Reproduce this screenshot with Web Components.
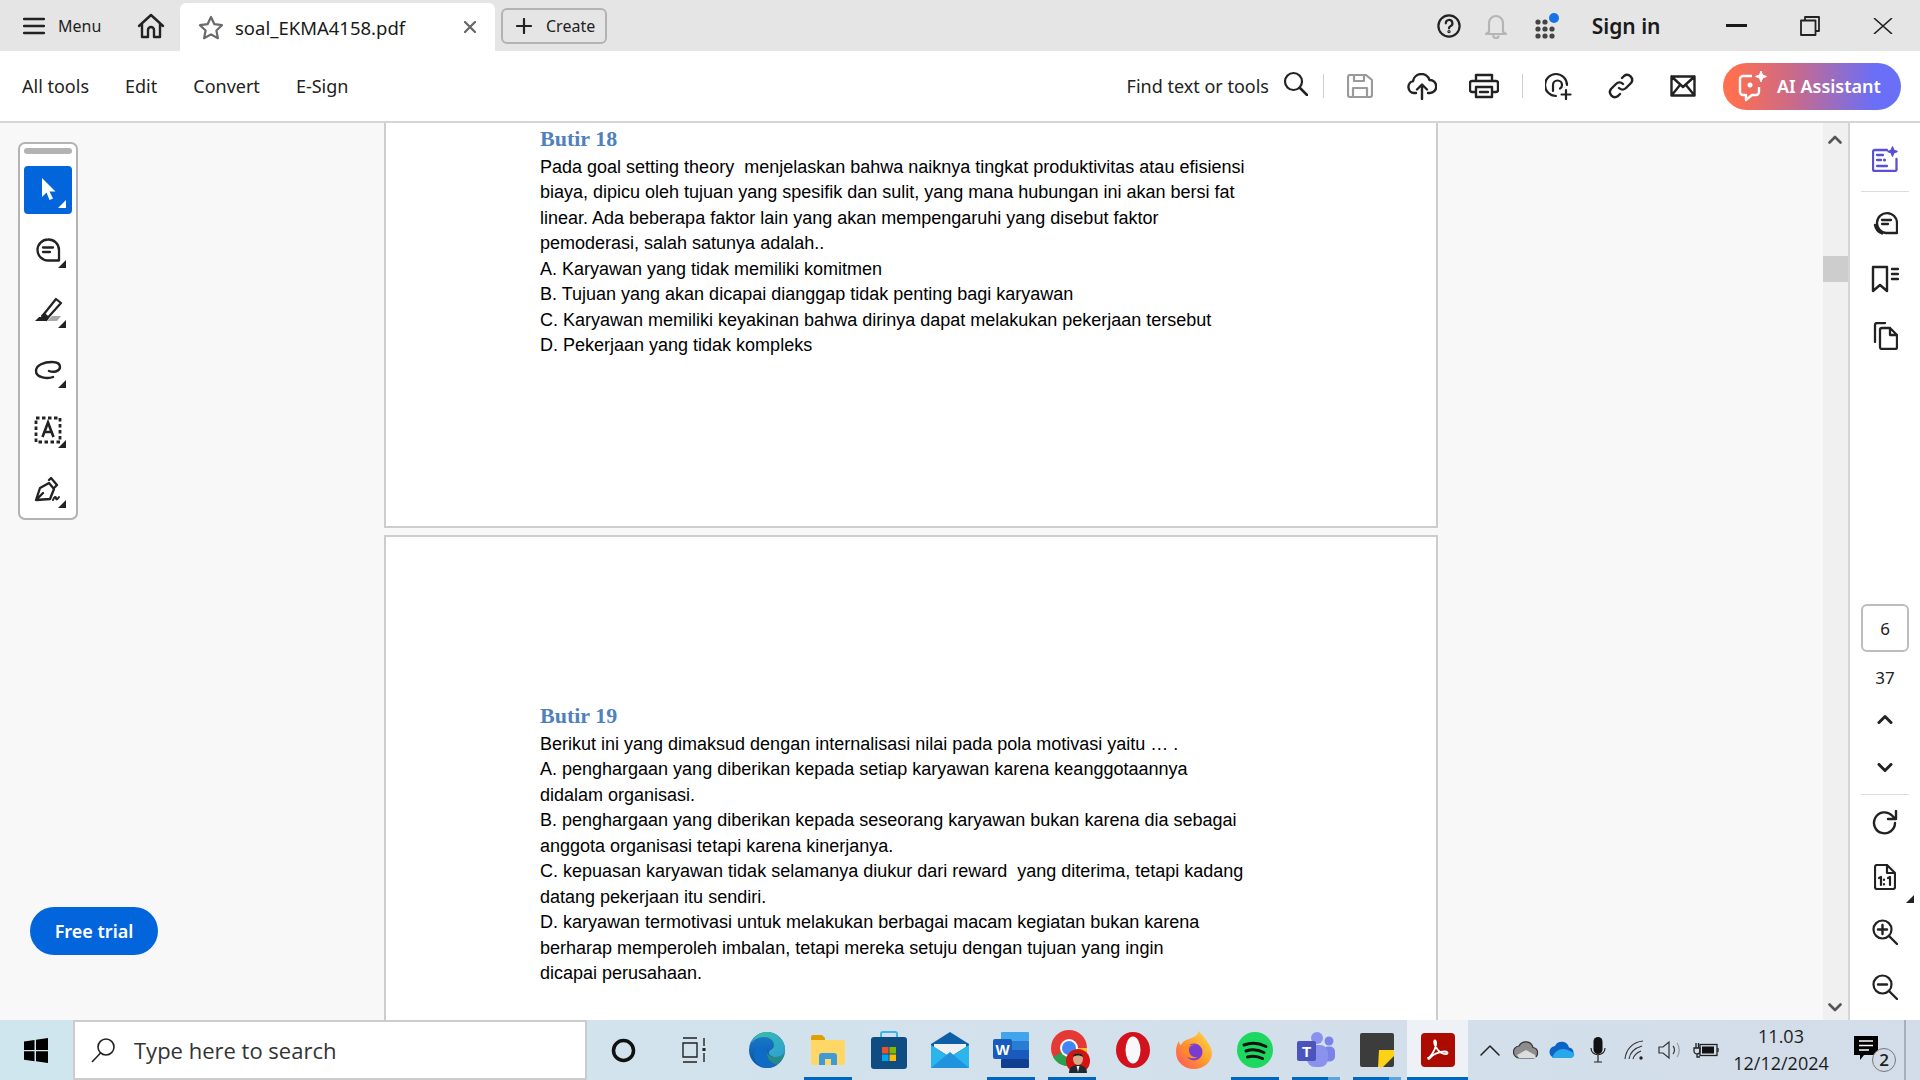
<!DOCTYPE html>
<html lang="id">
<head>
<meta charset="utf-8">
<title>soal_EKMA4158.pdf</title>
<style>
  html, body { margin: 0; height: 100%; overflow: hidden; background: #f8f8f8; }
  body { display: flex; flex-direction: column; width: 1920px; height: 1080px; font-family: "Noto Sans", sans-serif; }
  svg { display: block; }
</style>
</head>
<body>
<app-titlebar></app-titlebar>
<app-toolbar></app-toolbar>
<doc-workspace>
  <pdf-page slot="pages" style="height: 405px">
    <pdf-question heading="Butir 18" style="padding-top: 3px">
      <pdf-line>Pada goal setting theory &nbsp;menjelaskan bahwa naiknya tingkat produktivitas atau efisiensi</pdf-line>
      <pdf-line>biaya, dipicu oleh tujuan yang spesifik dan sulit, yang mana hubungan ini akan bersi fat</pdf-line>
      <pdf-line>linear. Ada beberapa faktor lain yang akan mempengaruhi yang disebut faktor</pdf-line>
      <pdf-line>pemoderasi, salah satunya adalah..</pdf-line>
      <pdf-line>A. Karyawan yang tidak memiliki komitmen</pdf-line>
      <pdf-line>B. Tujuan yang akan dicapai dianggap tidak penting bagi karyawan</pdf-line>
      <pdf-line>C. Karyawan memiliki keyakinan bahwa dirinya dapat melakukan pekerjaan tersebut</pdf-line>
      <pdf-line>D. Pekerjaan yang tidak kompleks</pdf-line>
    </pdf-question>
  </pdf-page>
  <pdf-page slot="pages" style="height: 600px">
    <pdf-question heading="Butir 19" style="padding-top: 166px">
      <pdf-line>Berikut ini yang dimaksud dengan internalisasi nilai pada pola motivasi yaitu … .</pdf-line>
      <pdf-line>A. penghargaan yang diberikan kepada setiap karyawan karena keanggotaannya</pdf-line>
      <pdf-line>didalam organisasi.</pdf-line>
      <pdf-line>B. penghargaan yang diberikan kepada seseorang karyawan bukan karena dia sebagai</pdf-line>
      <pdf-line>anggota organisasi tetapi karena kinerjanya.</pdf-line>
      <pdf-line>C. kepuasan karyawan tidak selamanya diukur dari reward &nbsp;yang diterima, tetapi kadang</pdf-line>
      <pdf-line>datang pekerjaan itu sendiri.</pdf-line>
      <pdf-line>D. karyawan termotivasi untuk melakukan berbagai macam kegiatan bukan karena</pdf-line>
      <pdf-line>berharap memperoleh imbalan, tetapi mereka setuju dengan tujuan yang ingin</pdf-line>
      <pdf-line>dicapai perusahaan.</pdf-line>
    </pdf-question>
  </pdf-page>
</doc-workspace>
<win-taskbar></win-taskbar>

<script>
const ink = '#222';
const svg = (w, h, body, vb) => `<svg width="${w}" height="${h}" viewBox="${vb || `0 0 ${w} ${h}`}" fill="none" stroke="currentColor" stroke-width="2.2" stroke-linecap="round" stroke-linejoin="round">${body}</svg>`;

class AppTitlebar extends HTMLElement {
  constructor() {
    super();
    this.attachShadow({ mode: 'open' });
    this.shadowRoot.innerHTML = `
      <style>
        :host { display: flex; align-items: stretch; height: 51px; flex: none; background: #e5e5e5; color: ${ink}; font-size: 16px; }
        .menu { display: flex; align-items: center; width: 137px; padding-left: 23px; box-sizing: border-box; gap: 13px; }
        .home { display: flex; align-items: center; width: 43px; }
        .tab { display: flex; align-items: center; width: 315px; margin-top: 3px; background: #fff; border-radius: 6px 6px 0 0; box-sizing: border-box; padding-left: 18px; font-size: 18.5px; color: #1a1a1a; }
        .tab span { margin-left: 11px; flex: 1; }
        .tab svg:last-child { margin-right: 19px; color: #666; }
        .create { display: flex; align-items: center; align-self: center; height: 36px; width: 106px; margin-left: 6px; box-sizing: border-box; border: 2px solid #b3b3b3; border-radius: 6px; padding-left: 13px; gap: 14px; }
        .spacer { flex: 1; }
        .slot { display: flex; align-items: center; justify-content: center; }
        .sign { font-size: 21px; font-weight: 600; color: #1a1a1a; margin: 0 39px 0 18px; align-self: center; white-space: nowrap; }
        .win { width: 73.5px; }
      </style>
      <div class="menu">
        ${svg(22, 18, '<path d="M1 2h20M1 9h20M1 16h20" stroke-width="2.4"/>')}
        <span>Menu</span>
      </div>
      <div class="home">${svg(28, 26, '<path d="M2 13 14 2l12 11M5 11v13h6v-7a3 3 0 0 1 6 0v7h6V11" stroke-width="2.4"/>')}</div>
      <div class="tab">
        ${svg(26, 25, '<path d="M13 2l3.4 7.2 7.6 1-5.6 5.3 1.5 7.7L13 19.4l-6.9 3.8 1.5-7.7L2 10.2l7.6-1z" stroke="#6a6a6a"/>')}
        <span>soal_EKMA4158.pdf</span>
        ${svg(12, 12, '<path d="M1 1l10 10M11 1 1 11" stroke-width="2.2"/>')}
      </div>
      <div class="create">
        ${svg(16, 16, '<path d="M8 1v14M1 8h14" stroke-width="2.2"/>')}
        <span>Create</span>
      </div>
      <div class="spacer"></div>
      <div class="slot" style="width:47px">${svg(24, 24, '<circle cx="12" cy="12" r="10.6"/><path d="M8.8 9.3a3.3 3.3 0 1 1 4.6 3c-1 .5-1.4 1-1.4 2"/><circle cx="12" cy="17.6" r=".6"/>')}</div>
      <div class="slot" style="width:47px;color:#b5b5b5">${svg(24, 26, '<path d="M5 19V10a7 7 0 0 1 14 0v9l3 2H2zM9.5 21.5a2.6 2.6 0 0 0 5 2"/>')}</div>
      <div class="slot" style="width:54px">
        <svg width="26" height="26" viewBox="0 0 26 26">
          <g fill="#444"><circle cx="4" cy="9" r="2.6"/><circle cx="11" cy="9" r="2.6"/><circle cx="4" cy="16" r="2.6"/><circle cx="11" cy="16" r="2.6"/><circle cx="18" cy="16" r="2.6"/><circle cx="4" cy="23" r="2.6"/><circle cx="11" cy="23" r="2.6"/><circle cx="18" cy="23" r="2.6"/></g>
          <circle cx="20" cy="5" r="5" fill="#1473e6"/>
        </svg>
      </div>
      <div class="sign">Sign in</div>
      <div class="slot win">${svg(21, 3, '<path d="M0 1.5h21" stroke-width="3" stroke-linecap="butt" stroke="#1a1a1a"/>')}</div>
      <div class="slot win">${svg(20, 20, '<path d="M5 4V1h14v14h-3M1 4.5h14.500V19H1z" stroke-width="1.8" stroke-linecap="butt"/>')}</div>
      <div class="slot win">${svg(20, 16, '<path d="M1.500 .5l17 15M18.500 .5l-17 15" stroke-width="1.6"/>')}</div>
    `;
  }
}
customElements.define('app-titlebar', AppTitlebar);

class AppToolbar extends HTMLElement {
  constructor() {
    super();
    this.attachShadow({ mode: 'open' });
    this.shadowRoot.innerHTML = `
      <style>
        :host { display: flex; align-items: center; height: 70px; flex: none; background: #fff; border-bottom: 2px solid #d5d5d5; color: ${ink}; padding: 0 19px 0 22px; box-sizing: content-box; font-size: 18px; }
        nav { display: flex; gap: 36px; }
        .spacer { flex: 1; }
        .find { white-space: nowrap; }
        .search { margin: 0 15px 0 14px; }
        .sep { width: 1px; height: 24px; background: #cfcfcf; flex: none; }
        .ico { display: flex; width: 62px; justify-content: center; flex: none; }
        .ai { display: flex; align-items: center; width: 178px; height: 47px; margin-left: 9px; box-sizing: border-box; padding-left: 15px; gap: 9px; border-radius: 24px; color: #fff; font-weight: 600; background: linear-gradient(90deg, #ff6f50 5%, #c96a8a 40%, #6a6ff8 85%); white-space: nowrap; }
      </style>
      <nav><span>All tools</span><span>Edit</span><span>Convert</span><span>E-Sign</span></nav>
      <div class="spacer"></div>
      <span class="find">Find text or tools</span>
      <div class="search">${svg(25, 25, '<circle cx="10.500" cy="10.500" r="8.500"/><path d="M17 17l7 7" stroke-width="2.6"/>')}</div>
      <div class="sep" style="margin-right:5px"></div>
      <div class="ico" style="color:#9a9a9a">${svg(26, 24, '<path d="M3 1h16l6 5v15a2 2 0 0 1-2 2H3a2 2 0 0 1-2-2V3a2 2 0 0 1 2-2zM7 1v6h10V1M6 23v-9h14v9"/>')}</div>
      <div class="ico">${svg(30, 27, '<path d="M9 20H7a6 6 0 0 1-1-11.800A8.500 8.500 0 0 1 22.500 7 6.500 6.500 0 0 1 23 20h-2M15 26V12M10 16.500l5-5 5 5" stroke-width="2.4"/>')}</div>
      <div class="ico">${svg(30, 26, '<path d="M7 8V2h16v6M7 19H3a2 2 0 0 1-2-2V10a2 2 0 0 1 2-2h24a2 2 0 0 1 2 2v7a2 2 0 0 1-2 2h-4M7 14h16v10H7zM11 19h8" stroke-width="2.4"/>')}</div>
      <div class="sep" style="margin:0 5px 0 7px"></div>
      <div class="ico">${svg(28, 28, '<path d="M11 24A11 11 0 1 1 22 13M8 19v-6a4.500 4.500 0 0 1 9 0c0 2-1 3-2 3.500M21 18v9M16.500 22.500h9" stroke-width="2.2"/>')}</div>
      <div class="ico">${svg(26, 26, '<path d="M11 15a5 5 0 0 0 7 0l5-5a5 5 0 0 0-7-7l-2 2M15 11a5 5 0 0 0-7 0l-5 5a5 5 0 0 0 7 7l2-2" stroke-width="2.4"/>')}</div>
      <div class="ico">${svg(26, 22, '<path d="M1.500 1.500h23v19h-23zM1.500 1.500 13 12 24.500 1.500M1.500 20.500 10 10M24.500 20.500 16 10" stroke-width="2.4"/>')}</div>
      <div class="ai">
        <svg width="30" height="32" viewBox="0 0 30 32" fill="none" stroke="#fff" stroke-width="2.4" stroke-linejoin="round">
          <path d="M14 6H5a3 3 0 0 0-3 3v13a3 3 0 0 0 3 3h3v5l6-5h4a3 3 0 0 0 3-3v-5"/>
          <path d="M23 1l1.500 4 4 1.500-4 1.500-1.500 4-1.500-4-4-1.500 4-1.500z" fill="#fff" stroke-width="1"/>
          <circle cx="12" cy="15" r="2.500" fill="#fff" stroke="none"/>
        </svg>
        <span>AI Assistant</span>
      </div>
    `;
  }
}
customElements.define('app-toolbar', AppToolbar);

class ToolButton extends HTMLElement {
  constructor() {
    super();
    this.attachShadow({ mode: 'open' });
    this.shadowRoot.innerHTML = `
      <style>
        :host { display: flex; position: relative; width: 48px; height: 48px; align-items: center; justify-content: center; color: ${ink}; border-radius: 4px; }
        :host([selected]) { background: #0265dc; color: #fff; }
        :host::after { content: ""; position: absolute; right: 6px; bottom: 6px; width: 8px; height: 8px; background: currentColor; clip-path: polygon(100% 0, 100% 100%, 0 100%); }
      </style>
      <slot></slot>
    `;
  }
}
customElements.define('tool-button', ToolButton);

class ToolPalette extends HTMLElement {
  constructor() {
    super();
    this.attachShadow({ mode: 'open' });
    this.shadowRoot.innerHTML = `
      <style>
        :host { position: absolute; left: 18px; top: 19px; width: 60px; height: 378px; box-sizing: border-box; background: #fff; border: 2px solid #b3b3b3; border-radius: 7px; display: flex; flex-direction: column; align-items: center; padding-top: 4px; }
        .grip { width: 48px; height: 6px; border-radius: 3px; background: #b3b3b3; margin-bottom: 12px; flex: none; }
        .tools { display: flex; flex-direction: column; gap: 12px; }
      </style>
      <div class="grip"></div>
      <div class="tools">
        <tool-button selected><svg width="48" height="48" viewBox="0 0 48 48"><path d="M18 12l13.500 13.500h-6l3.500 7-3.500 1.500-3-7.500L18 31z" fill="#fff"/></svg></tool-button>
        <tool-button>${svg(26, 24, '<path d="M13 1.500a10.500 10.500 0 1 0 0 21h11V12A10.500 10.500 0 0 0 13 1.500zM8 9.500h10M8 14h7" stroke-width="2.300"/>')}</tool-button>
        <tool-button>
          <svg width="28" height="26" viewBox="0 0 28 26" fill="none" stroke="currentColor" stroke-width="2.200" stroke-linejoin="round">
            <path d="M10 17 22 2l5 4-13 14.500z"/><path d="M8 19l2-2 4 3.500-1.500 2.500z" fill="currentColor"/>
            <path d="M1 24l4-4h5l3 4z" fill="currentColor" stroke="none"/><path d="M15 24l5-5h9l-4 5z" fill="#aaa" stroke="none" transform="translate(-2 0)"/>
          </svg>
        </tool-button>
        <tool-button>${svg(28, 20, '<path d="M19 17c-5 2-17 1-17-6C2 5 10 2 18 2c5 0 8 2 8 5 0 4-6 6-11 4" stroke-width="2.400"/>')}</tool-button>
        <tool-button>
          <svg width="28" height="28" viewBox="0 0 28 28" fill="none">
            <rect x="2" y="2" width="24" height="24" stroke="currentColor" stroke-width="2.800" stroke-dasharray="3.500 2.500"/>
            <path d="M8.500 21 14 6.500 19.500 21M10.500 16h7" stroke="currentColor" stroke-width="2.600"/>
          </svg>
        </tool-button>
        <tool-button>
          <svg width="28" height="26" viewBox="0 0 28 26" fill="none" stroke="currentColor" stroke-width="2.300" stroke-linejoin="round" stroke-linecap="round">
            <path d="M2 23 6 11l9-5 5 6-4 10zM2 23l7-7M15 3l2-2 6 7-2 2"/><path d="M19 23c1-3 3-4 3-2s1 2 3-1" stroke-width="2"/>
          </svg>
        </tool-button>
      </div>
    `;
  }
}
customElements.define('tool-palette', ToolPalette);

class FreeTrial extends HTMLElement {
  constructor() {
    super();
    this.attachShadow({ mode: 'open' });
    this.shadowRoot.innerHTML = `
      <style>
        :host { position: absolute; left: 30px; top: 784px; width: 128px; height: 48px; border-radius: 24px; background: #0265dc; color: #fff; display: flex; align-items: center; justify-content: center; font-size: 18px; font-weight: 600; }
      </style>
      <slot>Free trial</slot>
    `;
  }
}
customElements.define('free-trial', FreeTrial);

class PdfPage extends HTMLElement {
  constructor() {
    super();
    this.attachShadow({ mode: 'open' });
    this.shadowRoot.innerHTML = `
      <style>
        :host { display: block; flex: none; box-sizing: border-box; background: #fff; border: 2px solid #cdcdcd; }
        :host(:first-child) { border-top: 0; }
      </style>
      <slot></slot>
    `;
  }
}
customElements.define('pdf-page', PdfPage);

class PdfQuestion extends HTMLElement {
  constructor() {
    super();
    this.attachShadow({ mode: 'open' });
    this.shadowRoot.innerHTML = `
      <style>
        :host { display: block; padding-left: 154px; }
        h2 { margin: 0 0 3px; height: 26px; line-height: 26px; font: bold 22px/26px "Liberation Serif", serif; color: #4f81bd; }
      </style>
      <h2></h2>
      <slot></slot>
    `;
    this.shadowRoot.querySelector('h2').textContent = this.getAttribute('heading') || '';
  }
  connectedCallback() {
    this.shadowRoot.querySelector('h2').textContent = this.getAttribute('heading') || '';
  }
}
customElements.define('pdf-question', PdfQuestion);

class PdfLine extends HTMLElement {
  constructor() {
    super();
    this.attachShadow({ mode: 'open' });
    this.shadowRoot.innerHTML = `
      <style>
        :host { display: block; height: 25.46px; line-height: 25.46px; font-family: "Liberation Sans", Arial, sans-serif; font-size: 18px; color: #000; white-space: nowrap; }
      </style>
      <slot></slot>
    `;
  }
}
customElements.define('pdf-line', PdfLine);

class RailButton extends HTMLElement {
  constructor() {
    super();
    this.attachShadow({ mode: 'open' });
    this.shadowRoot.innerHTML = `
      <style>
        :host { display: flex; align-items: center; justify-content: center; width: 70px; flex: none; color: ${ink}; }
      </style>
      <slot></slot>
    `;
  }
}
customElements.define('rail-button', RailButton);

class DocRail extends HTMLElement {
  constructor() {
    super();
    this.attachShadow({ mode: 'open' });
    this.shadowRoot.innerHTML = `
      <style>
        :host { display: flex; flex-direction: column; width: 70px; flex: none; background: #fff; font-size: 17px; color: ${ink}; }
        .rule { height: 1px; width: 48px; background: #ddd; margin: 0 auto; flex: none; }
        .page { width: 48px; height: 48px; box-sizing: border-box; margin: 0 auto; border: 2px solid #bdbdbd; border-radius: 6px; display: flex; align-items: center; justify-content: center; }
        .num { text-align: center; }
        .tri { position: relative; }
        .tri::after { content: ""; position: absolute; right: 6px; bottom: 0; width: 8px; height: 8px; background: ${ink}; clip-path: polygon(100% 0, 100% 100%, 0 100%); }
      </style>
      <rail-button style="height:56px;margin-top:8px;padding-bottom:0"><svg width="26" height="26" viewBox="0 0 26 26" fill="none" stroke="#5a50d6" stroke-width="2.300" stroke-linejoin="round" stroke-linecap="round"><path d="M15 4H3a2 2 0 0 0-2 2v17a2 2 0 0 0 2 2h20a1.500 1.500 0 0 0 1.500-2V13M5 9h6M5 14h4M5 20h10"/><circle cx="12.500" cy="14" r="1.600" fill="#5a50d6" stroke="none"/><path d="M20.500 1l1.200 3.300L25 5.500l-3.300 1.200-1.200 3.300-1.200-3.300L16 5.500l3.300-1.200z" fill="#5a50d6" stroke-width="1.500"/></svg></rail-button>
      <div class="rule" style="margin-top:4px"></div>
      <rail-button style="height:60px">${svg(26, 26, '<path d="M25 24H14a10 10 0 1 1 11-10zM10 11h9M10 15h6M10 24.500a11 11 0 0 1-7-8.500M5 9" stroke-width="2.300"/>')}</rail-button>
      <rail-button style="height:53px">${svg(28, 28, '<path d="M2 2h14v24l-7-6-7 6zM21 4h6M21 9h6M21 14h6" stroke-width="2.400"/>')}</rail-button>
      <rail-button style="height:62px">${svg(26, 28, '<path d="M3 20V3a2 2 0 0 1 2-2h8M8 8a2 2 0 0 1 2-2h8l7 7v12a2 2 0 0 1-2 2H10a2 2 0 0 1-2-2zM18 6v7h7" stroke-width="2.300"/>')}</rail-button>
      <div style="height:237px;flex:none"></div>
      <div class="page">6</div>
      <div class="num" style="margin-top:14px;height:24px;line-height:24px">37</div>
      <rail-button style="height:50px;margin-top:4px">${svg(16, 10, '<path d="M2 8.500l6-6 6 6" stroke-width="3"/>')}</rail-button>
      <rail-button style="height:48px">${svg(16, 10, '<path d="M2 1.500l6 6 6-6" stroke-width="3"/>')}</rail-button>
      <div class="rule" style="margin-top:2px"></div>
      <rail-button style="height:56px">${svg(26, 26, '<path d="M23 13a10.500 10.500 0 1 1-3-7.500l3.500 3.500M24 1v8h-8" stroke-width="2.400"/>')}</rail-button>
      <rail-button class="tri" style="height:52px">${svg(22, 26, '<path d="M3 1h10l8 8v14a2 2 0 0 1-2 2H3a2 2 0 0 1-2-2V3a2 2 0 0 1 2-2zM13 1v8h8M5 14l2-1v8M10 15.500v.500M10 20v.500M14 14l2-1v8" stroke-width="2.200"/>')}</rail-button>
      <rail-button style="height:58px">${svg(26, 26, '<circle cx="10.500" cy="10.500" r="9"/><path d="M17 17l8 8M6 10.500h9M10.500 6v9" stroke-width="2.400"/>')}</rail-button>
      <rail-button style="height:52px">${svg(26, 26, '<circle cx="10.500" cy="10.500" r="9"/><path d="M17 17l8 8M6 10.500h9" stroke-width="2.400"/>')}</rail-button>
    `;
  }
}
customElements.define('doc-rail', DocRail);

class DocWorkspace extends HTMLElement {
  constructor() {
    super();
    this.attachShadow({ mode: 'open' });
    this.shadowRoot.innerHTML = `
      <style>
        :host { display: flex; flex: 1; min-height: 0; overflow: hidden; background: #f8f8f8; }
        .view { position: relative; flex: none; width: 1823px; overflow: hidden; }
        .pages { display: flex; flex-direction: column; gap: 7px; width: 1054px; margin-left: 384px; }
        .scroll { position: relative; flex: none; width: 25px; background: #f0f0f0; color: #555; }
        .scroll svg { position: absolute; left: 5px; }
        .thumb { position: absolute; left: 0; right: 0; top: 133px; height: 26px; background: #cdcdcd; }
        .line { width: 2px; flex: none; background: #d5d5d5; }
      </style>
      <div class="view">
        <div class="pages"><slot name="pages"></slot></div>
        <tool-palette></tool-palette>
        <free-trial></free-trial>
      </div>
      <div class="scroll">
        ${svg(14, 9, '<path d="M1.500 7.500l5.500-5.500 5.500 5.500" stroke-width="2.600"/>').replace('<svg', '<svg style="top:12px"')}
        <div class="thumb"></div>
        ${svg(14, 9, '<path d="M1.500 1.500l5.500 5.500 5.500-5.500" stroke-width="2.600"/>').replace('<svg', '<svg style="top:880px"')}
      </div>
      <div class="line"></div>
      <doc-rail></doc-rail>
    `;
  }
}
customElements.define('doc-workspace', DocWorkspace);

class TaskbarApp extends HTMLElement {
  constructor() {
    super();
    this.attachShadow({ mode: 'open' });
    this.shadowRoot.innerHTML = `
      <style>
        :host { display: flex; position: relative; width: 61px; height: 60px; flex: none; align-items: center; justify-content: center; }
        :host([state="active"]) { background: #eef2f7; }
        :host([state])::after { content: ""; position: absolute; left: 6.500px; right: 6.500px; bottom: 0; height: 3px; background: #0067c0; }
        :host([state="active"])::after { left: 0; right: 0; }
        :host([state="stack"])::after { background: linear-gradient(90deg, #0067c0 75%, #5ca5e0 75%); }
      </style>
      <slot></slot>
    `;
  }
}
customElements.define('taskbar-app', TaskbarApp);

class WinTaskbar extends HTMLElement {
  constructor() {
    super();
    this.attachShadow({ mode: 'open' });
    this.shadowRoot.innerHTML = `
      <style>
        :host { display: flex; align-items: center; height: 60px; flex: none; background: linear-gradient(90deg, #d0e6ee 0%, #d2e2ec 40%, #d3dde9 100%); font-family: "Open Sans", sans-serif; color: #1c1c1c; }
        .start { width: 73px; display: flex; justify-content: center; flex: none; padding-right: 1px; box-sizing: border-box; }
        .search { width: 514px; height: 60px; box-sizing: border-box; flex: none; background: #fff; border: 2px solid #ccc; display: flex; align-items: center; padding-left: 15px; gap: 18px; font-size: 22px; color: #333; }
        .round { width: 72px; display: flex; justify-content: center; flex: none; }
        .apps { display: flex; margin-left: 5px; }
        .tray { display: flex; align-items: center; margin-left: 4px; }
        .t { width: 36px; display: flex; justify-content: center; flex: none; }
        .clock { width: 114px; text-align: center; font-size: 18px; line-height: 27px; flex: none; }
        .note { position: relative; width: 44px; margin-left: 16px; flex: none; }
        .badge { position: absolute; left: 18px; top: 12px; width: 24px; height: 24px; box-sizing: border-box; border-radius: 50%; background: #d2dbe6; border: 1.500px solid #777; display: flex; align-items: center; justify-content: center; font-size: 17px; font-weight: 600; }
        .edge { width: 2px; height: 60px; background: #a9afb8; margin-left: 6px; flex: none; }
      </style>
      <div class="start">
        <svg width="24" height="25" viewBox="0 0 24 25"><path fill="#000" d="M0 3.500l10.500-1.500v10H0zM12 1.800 24 0v12H12zM0 13.200h10.500v10L0 21.700zM12 13.200h12V25l-12-1.800z"/></svg>
      </div>
      <div class="search">
        <svg width="26" height="26" viewBox="0 0 26 26" fill="none" stroke="#222" stroke-width="1.600"><circle cx="16" cy="10" r="8"/><path d="M10.500 16 2 25"/></svg>
        <span>Type here to search</span>
      </div>
      <div class="round"><svg width="25" height="25" viewBox="0 0 25 25" fill="none"><circle cx="12.500" cy="12.500" r="10" stroke="#111" stroke-width="3.500"/></svg></div>
      <div class="round"><svg width="26" height="26" viewBox="0 0 26 26" fill="none" stroke="#222" stroke-width="1.400"><path d="M1 1h14M1 25h14M1 6h14v14H1zM22 1v8M22 16v9"/><rect x="20.500" y="11" width="3" height="3" fill="#222" stroke="none"/></svg></div>
      <div class="apps">
        <taskbar-app>
          <svg width="38" height="38" viewBox="0 0 38 38">
            <defs><linearGradient id="e1" x1="0" y1="0" x2="1" y2="1"><stop offset="0" stop-color="#35c1a0"/><stop offset="1" stop-color="#2f9fd8"/></linearGradient><linearGradient id="e2" x1="0" y1="0" x2="0" y2="1"><stop offset="0" stop-color="#1a7fd0"/><stop offset="1" stop-color="#0c4fa0"/></linearGradient></defs>
            <circle cx="19" cy="19" r="18" fill="url(#e2)"/>
            <path d="M3 13C6 5 12 1 19 1c10 0 18 8 18 17 0 5-4 8-9 8-4 0-7-2-7-4 0-4 5-3 5-8 0-5-5-8-10-8C10 6 5 9 3 13z" fill="url(#e1)"/>
            <path d="M19 22c0 6 4 10 10 12-3 2-7 3-10 3C11 37 5 30 6 22c2-6 8-9 13-7-1 2-1 5 0 7z" fill="#0f6cc4"/>
            <path d="M37 18c1 6-3 12-8 16-6-2-10-6-10-12 2 3 5 4 9 4 5 0 9-3 9-8z" fill="#3bb36b" opacity=".55"/>
          </svg>
        </taskbar-app>
        <taskbar-app state="open">
          <svg width="34" height="36" viewBox="0 0 34 36">
            <path d="M0 5a2 2 0 0 1 2-2h9l3 3v4H0z" fill="#dfa100"/>
            <path d="M0 8h32a2 2 0 0 1 2 2v21a2 2 0 0 1-2 2H2a2 2 0 0 1-2-2z" fill="#ffd766"/>
            <path d="M8 33V24a3 3 0 0 1 3-3h12a3 3 0 0 1 3 3v9h-6v-6h-6v6z" fill="#3f9bd8"/>
          </svg>
        </taskbar-app>
        <taskbar-app>
          <svg width="36" height="38" viewBox="0 0 36 38">
            <path d="M10 9V3a2 2 0 0 1 2-2h12a2 2 0 0 1 2 2v6" fill="none" stroke="#39b6e8" stroke-width="2"/>
            <path d="M0 9a3 3 0 0 1 3-3h30a3 3 0 0 1 3 3v26a3 3 0 0 1-3 3H3a3 3 0 0 1-3-3z" fill="#0f4c81"/>
            <rect x="11" y="16" width="6.500" height="6.500" fill="#f25022"/><rect x="18.500" y="16" width="6.500" height="6.500" fill="#7fba00"/><rect x="11" y="23.500" width="6.500" height="6.500" fill="#00a4ef"/><rect x="18.500" y="23.500" width="6.500" height="6.500" fill="#ffb900"/>
          </svg>
        </taskbar-app>
        <taskbar-app>
          <svg width="38" height="36" viewBox="0 0 38 36">
            <path d="M0 12 19 0l19 12v24H0z" fill="#0f5fa6"/>
            <path d="M3 12h32v3L19 25 3 15z" fill="#eef1f2"/>
            <path d="M0 13l19 12 19-12v23H0z" fill="#2cb4ec"/>
            <path d="M0 36 19 20l19 16z" fill="#1f93dd"/>
          </svg>
        </taskbar-app>
        <taskbar-app state="open">
          <svg width="36" height="36" viewBox="0 0 36 36">
            <rect x="8" y="0" width="28" height="9" rx="1" fill="#41a5ee"/><rect x="8" y="9" width="28" height="9" fill="#2b7cd3"/><rect x="8" y="18" width="28" height="9" fill="#185abd"/><rect x="8" y="27" width="28" height="9" rx="1" fill="#103f91"/>
            <rect x="0" y="7" width="19" height="20" rx="2" fill="#185abd"/>
            <text x="9.500" y="22.500" text-anchor="middle" font-family="'Liberation Sans',sans-serif" font-weight="700" font-size="15" fill="#fff">W</text>
          </svg>
        </taskbar-app>
        <taskbar-app state="open">
          <svg width="42" height="44" viewBox="0 0 42 44" style="margin-top:4px">
            <circle cx="18" cy="18" r="18" fill="#e53935"/>
            <path d="M18 18 2 27A18 18 0 0 0 21 36z" fill="#2e9e4f"/>
            <path d="M18 18h18a18 18 0 0 1-15 18z" fill="#fbc02d"/>
            <circle cx="18" cy="18" r="9" fill="#fff"/><circle cx="18" cy="18" r="7" fill="#4285f4"/>
            <circle cx="27" cy="31" r="12" fill="#d5140f"/>
            <path d="M18 43c0-6 4-8 9-8s9 2 9 8z" fill="#1e2a33"/>
            <ellipse cx="27" cy="29" rx="5" ry="6" fill="#d8a98a"/><path d="M22 27c0-5 10-5 10 0-3-2-7-2-10 0z" fill="#222"/>
            <path d="M25.500 36h3l-1.500 6z" fill="#eee"/>
          </svg>
        </taskbar-app>
        <taskbar-app>
          <svg width="34" height="36" viewBox="0 0 34 36"><ellipse cx="17" cy="18" rx="17" ry="18" fill="#d2121c"/><ellipse cx="17" cy="18" rx="7.500" ry="13.500" fill="#f7f8fa"/></svg>
        </taskbar-app>
        <taskbar-app>
          <svg width="36" height="38" viewBox="0 0 36 38">
            <defs><linearGradient id="f1" x1="0" y1="1" x2="1" y2="0"><stop offset="0" stop-color="#ff4f5e"/><stop offset=".5" stop-color="#ff9a2e"/><stop offset="1" stop-color="#ffe14d"/></linearGradient></defs>
            <path d="M18 38C8 38 0 31 0 21c0-5 1-8 3-11 0 2 1 4 2 4 2-4 5-5 8-6C18 6 23 4 22 0c5 4 8 8 10 12 3 4 4 7 4 10 0 9-8 16-18 16z" fill="url(#f1)"/>
            <circle cx="18" cy="21" r="8.500" fill="#7a3bd0"/>
            <path d="M7 17c3-3 8-4 11-3-4 0-5 3-5 5 0 5 4 8 9 7-5 3-15 1-15-9z" fill="#ff8a26"/>
          </svg>
        </taskbar-app>
        <taskbar-app state="open">
          <svg width="36" height="36" viewBox="0 0 36 36" fill="none"><circle cx="18" cy="18" r="18" fill="#1ed760"/><path d="M7 13c7-2.500 15-2 22 1.500M9 19c6-2 12-1.500 18 1.500M10.500 25c5-1.500 10-1 15 1.500" stroke="#111" stroke-width="3" stroke-linecap="round"/></svg>
        </taskbar-app>
        <taskbar-app state="stack">
          <svg width="38" height="36" viewBox="0 0 38 36">
            <circle cx="32" cy="9" r="4.500" fill="#7b83eb"/><rect x="26" y="14.500" width="12" height="15" rx="5" fill="#7b83eb"/>
            <circle cx="20" cy="6" r="6" fill="#8a92ee"/><rect x="10" y="13" width="21" height="22" rx="8" fill="#8a92ee"/>
            <rect x="0" y="9" width="19" height="20" rx="2" fill="#4b53bc"/>
            <text x="9.500" y="24.500" text-anchor="middle" font-family="'Liberation Sans',sans-serif" font-weight="700" font-size="15" fill="#fff">T</text>
          </svg>
        </taskbar-app>
        <taskbar-app state="stack">
          <svg width="34" height="34" viewBox="0 0 34 34"><rect width="34" height="34" rx="2" fill="#3c3c3c"/><path d="M34 17v6L23 34h-5l1-17z" fill="#fcd116"/></svg>
        </taskbar-app>
        <taskbar-app state="active">
          <svg width="34" height="34" viewBox="0 0 34 34" fill="none"><rect width="34" height="34" rx="4" fill="#ad0b00"/><path d="M7 25c3-1 7-8 8-13 .5-3-.5-5-1.500-4.500-1 1 0 5 3 9 2.500 3 6 5 9 4.500 2-.5 1-2.500-2-2.500-5 0-12 3-14 6-1.500 2-2 2-2.500.5z" stroke="#fff" stroke-width="1.800"/></svg>
        </taskbar-app>
      </div>
      <div class="tray">
        <div class="t">${svg(20, 11, '<path d="M1 10l9-9 9 9" stroke-width="1.500" stroke="#222"/>')}</div>
        <div class="t"><svg width="26" height="18" viewBox="0 0 26 18"><path d="M7 17a6 6 0 0 1-1-12 7.500 7.500 0 0 1 14 1.500 5.300 5.300 0 0 1 0 10.500z" fill="#8d8d8d" stroke="#333" stroke-width="1.200"/><path d="M4 14l9-5 9 5 1 3H6z" fill="#ddd"/></svg></div>
        <div class="t"><svg width="26" height="18" viewBox="0 0 26 18"><path d="M7 17a6 6 0 0 1-1-12 7.500 7.500 0 0 1 14 1.500 5.300 5.300 0 0 1 0 10.500z" fill="#0a64c8"/><path d="M3 17c2-6 7-9 11-9 5 0 8 3 11 4 1 3-1 5-4 5z" fill="#28a8ea"/></svg></div>
        <div class="t"><svg width="16" height="26" viewBox="0 0 16 26" fill="none"><rect x="3.500" y="0" width="9" height="17" rx="4.500" fill="#111"/><path d="M1 11c0 9 14 9 14 0M8 18v7M4 25h8" stroke="#222" stroke-width="1.200"/></svg></div>
        <div class="t"><svg width="20" height="20" viewBox="0 0 20 20" fill="none" stroke="#333" stroke-width="1.100"><path d="M1 19C2 9 9 2 19 1M5 19c1-7 6-11 13-13M9 19c1-4 3-6 8-8"/><circle cx="17" cy="18" r="1.700" fill="#222" stroke="none"/></svg></div>
        <div class="t"><svg width="24" height="20" viewBox="0 0 24 20" fill="none" stroke="#333" stroke-width="1.200"><path d="M1 7h4l6-5v16l-6-5H1zM15 6c2 2 2 6 0 8"/><path d="M19 3c3 4 3 10 0 14" stroke="#999"/></svg></div>
        <div class="t"><svg width="26" height="18" viewBox="0 0 26 18" fill="none" stroke="#222" stroke-width="1.300"><rect x="7" y="3.500" width="17" height="11" /><rect x="9" y="5.500" width="12" height="7" fill="#111" stroke="none"/><path d="M25 7v4M1 7h6v3a3 3 0 0 1-6 0zM3 2v5M5.500 2v5M4 13v3h3"/></svg></div>
        <div class="clock"><div>11.03</div><div>12/12/2024</div></div>
        <div class="note">
          <svg width="24" height="24" viewBox="0 0 24 24"><path d="M0 0h24v19H10l-4 5v-5H0z" fill="#000"/><path d="M5 5h14M5 9.500h14M5 14h10" stroke="#fff" stroke-width="1.300"/></svg>
          <div class="badge">2</div>
        </div>
        <div class="edge"></div>
      </div>
    `;
  }
}
customElements.define('win-taskbar', WinTaskbar);
</script>
</body>
</html>
